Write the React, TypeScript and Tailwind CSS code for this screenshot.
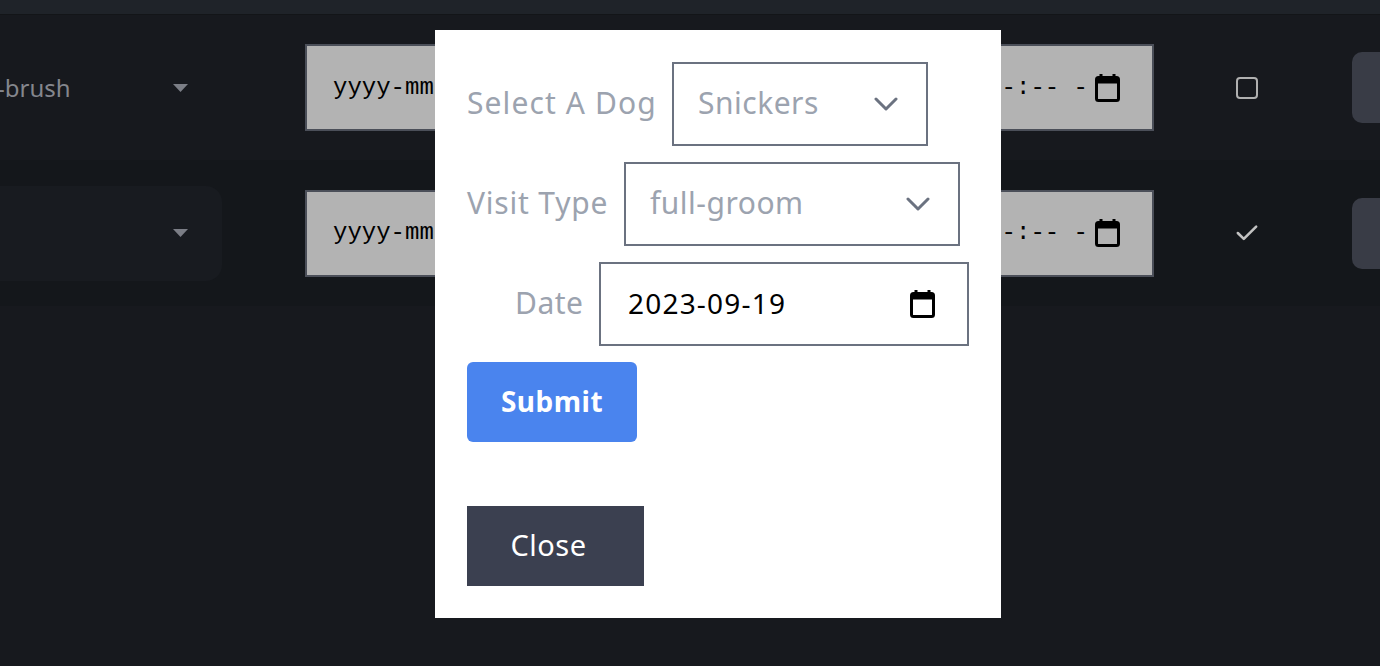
import React from "react";

const Cal = ({ className }: { className?: string }) => (
  <svg viewBox="0 0 25 28" className={className} fill="none">
    <rect x="4.5" y="0" width="3" height="5" fill="#000" />
    <rect x="17.5" y="0" width="3" height="5" fill="#000" />
    <rect x="1.5" y="3.5" width="22" height="23" rx="2" stroke="#000" strokeWidth="3" />
    <rect x="1.5" y="3.5" width="22" height="6" fill="#000" />
  </svg>
);

const Tri = () => (
  <svg viewBox="0 0 15 8" className="h-[8px] w-[15px]">
    <polygon points="0,0 15,0 7.5,8" fill="#7b7e86" />
  </svg>
);

const Chevron = () => (
  <svg viewBox="0 0 24 14" className="h-[14px] w-[24px]" fill="none">
    <polyline points="2,2 12,12 22,2" stroke="#6b7280" strokeWidth="3" strokeLinecap="round" strokeLinejoin="round" />
  </svg>
);

const DateBox = () => (
  <div className="ml-[83px] flex h-[87px] w-[849px] shrink-0 items-center border-2 border-[#4b4f59] bg-[#b3b3b3] pl-[26px] pr-[32px] font-['Liberation_Mono',monospace] text-[24px] text-black">
    <span className="whitespace-pre">yyyy-mm-dd</span>
    <span className="ml-auto whitespace-pre">--:-- -</span>
    <Cal className="ml-[7px] h-[28px] w-[25px]" />
  </div>
);

const ActionBtn = () => <div className="ml-[94px] h-[71px] w-[80px] shrink-0 rounded-[10px] bg-[#393c46]" />;

export default function App() {
  return (
    <div className="relative h-[666px] w-[1380px] overflow-hidden bg-[#17191e] font-['Noto_Sans',sans-serif]">
      <div className="h-[15px] border-b border-[#131518] bg-[#1f2329]" />
      <div className="flex h-[145px] items-center bg-[#17191e]">
        <div className="flex h-[95px] w-[222px] shrink-0 items-center justify-between pr-[34px]">
          <span className="-ml-[3px] text-[24px] text-[#84868d]">-brush</span>
          <Tri />
        </div>
        <DateBox />
        <div className="ml-[82px] flex h-[22px] w-[22px] shrink-0 items-center justify-center rounded-[4px] border-2 border-[#b0b0b0]" />
        <ActionBtn />
      </div>
      <div className="flex h-[146px] items-center bg-[#14171b]">
        <div className="flex h-[95px] w-[222px] shrink-0 items-center justify-end rounded-r-2xl bg-[#181b20] pr-[34px]">
          <Tri />
        </div>
        <DateBox />
        <div className="ml-[82px] flex h-[22px] w-[22px] shrink-0 items-center justify-center">
          <svg viewBox="0 0 24 18" className="h-[18px] w-[24px]" fill="none">
            <polyline points="2,9 8.5,15.5 22,2" stroke="#c2c2c2" strokeWidth="2.8" strokeLinecap="round" strokeLinejoin="round" />
          </svg>
        </div>
        <ActionBtn />
      </div>

      <div className="absolute left-[435px] top-[30px] flex h-[588px] w-[566px] flex-col bg-white px-8 pt-8 text-[30px] tracking-[0.5px] text-[#9ca3af]">
        <div className="flex h-[84px] items-center gap-[17px]">
          <span className="w-[188px] whitespace-nowrap pb-[4px] tracking-[1.1px]">Select A Dog</span>
          <div className="flex h-[84px] w-[256px] items-center justify-between border-2 border-[#6b7280] pl-[24px] pr-[28px]">
            <span className="pb-[4px]">Snickers</span>
            <Chevron />
          </div>
        </div>
        <div className="mt-4 flex h-[84px] items-center gap-[17px]">
          <span className="w-[140px] whitespace-nowrap pb-[4px] tracking-[0.8px]">Visit Type</span>
          <div className="flex h-[84px] w-[336px] items-center justify-between border-2 border-[#6b7280] pl-[24px] pr-[28px]">
            <span className="pb-[4px]">full-groom</span>
            <Chevron />
          </div>
        </div>
        <div className="ml-[48px] mt-4 flex h-[84px] items-center gap-[16px]">
          <span className="w-[68px] whitespace-nowrap pb-[4px]">Date</span>
          <div className="flex h-[84px] w-[370px] items-center justify-between border-2 border-[#6b7280] pl-[27px] pr-[32px]">
            <span className="pb-[2px] text-[28px] tracking-[1.2px] text-black">2023-09-19</span>
            <Cal className="h-[28px] w-[25px]" />
          </div>
        </div>
        <button className="mt-4 h-[80px] w-[170px] rounded-md bg-[#4a84ee] pb-[3px] text-[28px] font-bold text-white">Submit</button>
        <button className="mt-16 h-[80px] w-[177px] bg-[#3b4050] pb-[3px] pr-[14px] text-[29px] text-white">Close</button>
      </div>
    </div>
  );
}
